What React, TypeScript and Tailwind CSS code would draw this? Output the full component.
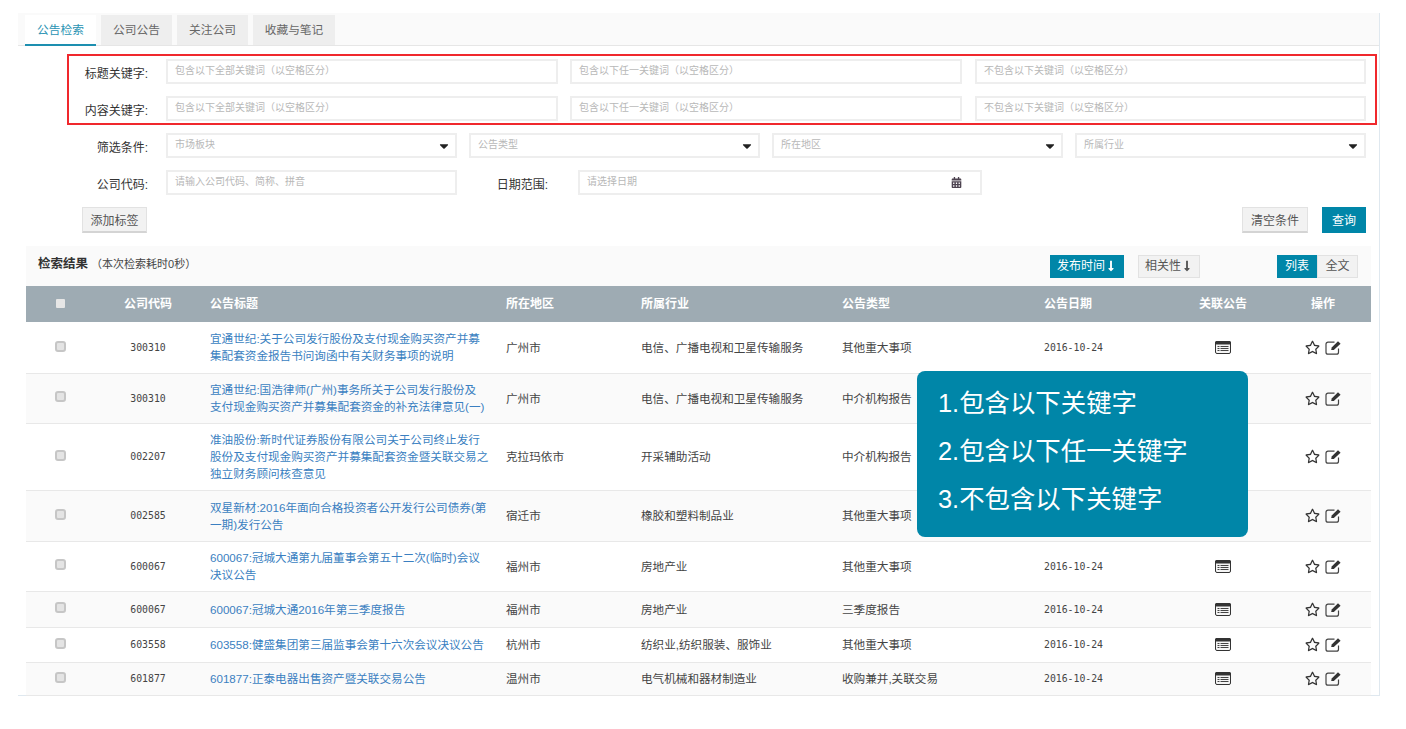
import { FaCaretDown, FaCalendarAlt, FaRegStar, FaLongArrowAltDown } from 'react-icons/fa';

const FONT = '"Liberation Sans", "Noto Sans CJK SC", sans-serif';

// covered: the callout sits over this row's date and related-notice cells
const ROWS = [
  { code: '300310', title: '宜通世纪:关于公司发行股份及支付现金购买资产并募\n集配套资金报告书问询函中有关财务事项的说明', area: '广州市', industry: '电信、广播电视和卫星传输服务', type: '其他重大事项', h: 'h-[51px]' },
  { code: '300310', title: '宜通世纪:国浩律师(广州)事务所关于公司发行股份及\n支付现金购买资产并募集配套资金的补充法律意见(一)', area: '广州市', industry: '电信、广播电视和卫星传输服务', type: '中介机构报告', h: 'h-[50px]', covered: true },
  { code: '002207', title: '准油股份:新时代证券股份有限公司关于公司终止发行\n股份及支付现金购买资产并募集配套资金暨关联交易之\n独立财务顾问核查意见', area: '克拉玛依市', industry: '开采辅助活动', type: '中介机构报告', h: 'h-[67px]', covered: true },
  { code: '002585', title: '双星新材:2016年面向合格投资者公开发行公司债券(第\n一期)发行公告', area: '宿迁市', industry: '橡胶和塑料制品业', type: '其他重大事项', h: 'h-[51px]', covered: true },
  { code: '600067', title: '600067:冠城大通第九届董事会第五十二次(临时)会议\n决议公告', area: '福州市', industry: '房地产业', type: '其他重大事项', h: 'h-[50px]' },
  { code: '600067', title: '600067:冠城大通2016年第三季度报告', area: '福州市', industry: '房地产业', type: '三季度报告', h: 'h-[36px]' },
  { code: '603558', title: '603558:健盛集团第三届监事会第十六次会议决议公告', area: '杭州市', industry: '纺织业,纺织服装、服饰业', type: '其他重大事项', h: 'h-[35px]' },
  { code: '601877', title: '601877:正泰电器出售资产暨关联交易公告', area: '温州市', industry: '电气机械和器材制造业', type: '收购兼并,关联交易', h: 'h-[33px]' },
];

function TextBox({ text, className }: { text: string; className: string }) {
  return (
    <div className={`flex h-[25px] items-center border-2 border-[#eeeeee] bg-white pb-[3px] pl-[7px] text-[10px] text-[#b8b8b8] ${className}`}>
      {text}
    </div>
  );
}

function SelectBox({ text }: { text: string }) {
  return (
    <div className="flex h-[25px] flex-1 items-center justify-between border-2 border-[#eeeeee] bg-white pl-[7px] pr-[4px] text-[10px] text-[#b8b8b8]">
      <span className="pb-[3px]">{text}</span>
      <FaCaretDown className="text-[14px] text-[#222222]" />
    </div>
  );
}

function Label({ text, className = 'w-[148px] pr-[18px] pt-[5px]' }: { text: string; className?: string }) {
  return <div className={`shrink-0 text-right text-[12px] text-[#333333] ${className}`}>{text}:</div>;
}

function ListIcon() {
  return (
    <svg width="16" height="13" viewBox="0 0 16 13">
      <rect x="0.5" y="0.5" width="15" height="12" rx="1.5" fill="#f4f4f4" stroke="#333333" />
      <rect x="0" y="0" width="16" height="3.5" rx="1.5" fill="#333333" />
      <path d="M2.5 5.5h2M2.5 7.5h2M2.5 9.5h2M5.5 5.5h8M5.5 7.5h8M5.5 9.5h8" stroke="#444444" strokeWidth="1" />
    </svg>
  );
}

function EditIcon() {
  return (
    <svg width="17" height="15" viewBox="0 0 17 15">
      <path d="M9.5 2.2H3a2 2 0 0 0-2 2v8a2 2 0 0 0 2 2h8.5a2 2 0 0 0 2-2V8.5" fill="none" stroke="#444444" strokeWidth="1.2" />
      <path d="M6.2 10 6.7 7.6 13 1.2 15.6 3.8 8.8 10Z" fill="#333333" />
    </svg>
  );
}

function GrayBtn({ text, className = '' }: { text: string; className?: string }) {
  return (
    <button className={`h-[26px] border border-[#e2e2e2] border-b-2 border-b-[#d4d4d4] bg-[#f2f2f2] pt-[2px] text-[12px] text-[#555555] ${className}`}>
      {text}
    </button>
  );
}

export default function App() {
  return (
    <div className="h-[729px] w-[1406px] overflow-hidden bg-white pt-[13px]" style={{ fontFamily: FONT }}>
      <div className="ml-[18px] h-[683px] w-[1362px] border-b border-r border-[#dfe8ef]">
        <div className="flex h-[33px] gap-[5px] border-b border-[#e6e6e6] bg-[#fafafa] pl-[7px] pt-[2px] text-[11.7px]">
          <div className="flex h-[31px] w-[71px] items-center justify-center border-b-2 border-[#1d8fb0] bg-white text-[#2a93b3]">公告检索</div>
          <div className="flex h-[30px] w-[71px] items-center justify-center bg-[#eeeeee] text-[#666666]">公司公告</div>
          <div className="flex h-[30px] w-[71px] items-center justify-center bg-[#eeeeee] text-[#666666]">关注公司</div>
          <div className="flex h-[30px] w-[82px] items-center justify-center bg-[#eeeeee] text-[#666666]">收藏与笔记</div>
        </div>

        <div className="ml-[49px] mt-[8px] flex h-[71px] w-[1310px] flex-col gap-[12px] border-2 border-[#f0282d] pl-[2px] pt-[3px]">
          <div className="flex items-center">
            <Label text="标题关键字" className="w-[95px] pr-[18px] pt-[4px]" />
            <TextBox text="包含以下全部关键词（以空格区分）" className="w-[392px]" />
            <TextBox text="包含以下任一关键词（以空格区分）" className="ml-[12px] w-[392px]" />
            <TextBox text="不包含以下关键词（以空格区分）" className="ml-[13px] w-[391px]" />
          </div>
          <div className="flex items-center">
            <Label text="内容关键字" className="w-[95px] pr-[18px] pt-[4px]" />
            <TextBox text="包含以下全部关键词（以空格区分）" className="w-[392px]" />
            <TextBox text="包含以下任一关键词（以空格区分）" className="ml-[12px] w-[392px]" />
            <TextBox text="不包含以下关键词（以空格区分）" className="ml-[13px] w-[391px]" />
          </div>
        </div>

        <div className="mt-[8px] flex w-[1348px] items-center">
          <Label text="筛选条件" />
          <div className="flex flex-1 gap-[12px]">
            <SelectBox text="市场板块" />
            <SelectBox text="公告类型" />
            <SelectBox text="所在地区" />
            <SelectBox text="所属行业" />
          </div>
        </div>

        <div className="mt-[12px] flex items-center">
          <Label text="公司代码" />
          <TextBox text="请输入公司代码、简称、拼音" className="w-[291px]" />
          <Label text="日期范围" className="w-[92px] pr-[1px] pt-[5px]" />
          <div className="ml-[29px] flex h-[25px] w-[404px] items-center justify-between border-2 border-[#eeeeee] bg-white pl-[7px] pr-[18px] text-[10px] text-[#b8b8b8]">
            <span className="pb-[3px]">请选择日期</span>
            <FaCalendarAlt className="text-[11px] text-[#4d4350]" />
          </div>
        </div>

        <div className="mt-[12px] flex w-[1348px] items-center justify-between pl-[64px]">
          <GrayBtn text="添加标签" className="w-[65px]" />
          <div className="flex gap-[14px]">
            <GrayBtn text="清空条件" className="w-[66px]" />
            <button className="h-[26px] w-[44px] bg-[#0086a8] pt-[2px] text-[12px] text-white">查询</button>
          </div>
        </div>

        <div className="ml-[8px] mt-[13px] flex h-[40px] w-[1345px] items-center justify-between bg-[#fafafa] pl-[12px] pr-[13px]">
          <div className="pb-[4px] text-[11px] text-[#444444]">
            <span className="text-[12.5px] font-bold text-[#333333]">检索结果</span> （本次检索耗时0秒）
          </div>
          <div className="flex items-center">
            <button className="flex h-[23px] w-[74px] items-center justify-center bg-[#0086a8] text-[12px] text-white">
              发布时间<FaLongArrowAltDown className="text-[12px]" />
            </button>
            <button className="ml-[14px] flex h-[23px] w-[62px] items-center justify-center border border-[#e2e2e2] bg-[#f2f2f2] text-[12px] text-[#555555]">
              相关性<FaLongArrowAltDown className="text-[12px]" />
            </button>
            <button className="ml-[77px] h-[23px] w-[40px] bg-[#0086a8] text-[12px] text-white">列表</button>
            <button className="h-[23px] w-[41px] border border-[#e2e2e2] bg-[#f2f2f2] text-[12px] text-[#555555]">全文</button>
          </div>
        </div>

        <div className="relative ml-[8px] w-[1345px]">
          <table className="w-full table-fixed border-collapse text-[11.6px] text-[#444444]">
            <colgroup>
              <col className="w-[68px]" />
              <col className="w-[116px]" />
              <col className="w-[296px]" />
              <col className="w-[135px]" />
              <col className="w-[201px]" />
              <col className="w-[202px]" />
              <col className="w-[129px]" />
              <col className="w-[100px]" />
              <col className="w-[98px]" />
            </colgroup>
            <thead>
              <tr className="h-[36px] bg-[#9eabb3] text-left text-[12px] text-white">
                <th className="text-center font-bold">
                  <span className="inline-block h-[9px] w-[9px] rounded-[1px] bg-[#e6e6e6]" />
                </th>
                <th className="pr-[8px] text-center font-bold">公司代码</th>
                <th className="font-bold">公告标题</th>
                <th className="font-bold">所在地区</th>
                <th className="font-bold">所属行业</th>
                <th className="font-bold">公告类型</th>
                <th className="font-bold">公告日期</th>
                <th className="text-center font-bold">关联公告</th>
                <th className="pl-[2px] text-center font-bold">操作</th>
              </tr>
            </thead>
            <tbody>
              {ROWS.map((row, i) => (
                <tr key={i} className={`${row.h} border-b border-[#e8e8e8] ${i % 2 === 1 ? 'bg-[#fafafa]' : 'bg-white'}`}>
                  <td className="text-center">
                    <span className="inline-block h-[11px] w-[11px] rounded-[3px] border-2 border-[#c6c6c6] bg-[#e4e4e4]" />
                  </td>
                  <td className="pr-[8px] pt-[2px] text-center font-['DejaVu_Sans_Mono'] text-[9.8px]">{row.code}</td>
                  <td className="whitespace-pre-line leading-[17px] text-[#3a7fc1]">{row.title}</td>
                  <td className="pt-[1px]">{row.area}</td>
                  <td className="pt-[1px]">{row.industry}</td>
                  <td className="pt-[1px]">{row.type}</td>
                  <td className="pt-[2px] font-['DejaVu_Sans_Mono'] text-[9.8px]">{row.covered ? '' : '2016-10-24'}</td>
                  <td>
                    {!row.covered && <div className="flex justify-center"><ListIcon /></div>}
                  </td>
                  <td>
                    <div className="flex items-center justify-center gap-[5px] pl-[3px] text-[#333333]">
                      <FaRegStar className="text-[15px]" />
                      <EditIcon />
                    </div>
                  </td>
                </tr>
              ))}
            </tbody>
          </table>

          <div className="absolute left-[891px] top-[85px] flex h-[166px] w-[331px] flex-col gap-[11px] rounded-[8px] bg-[#0086a8] pl-[21px] pt-[14px] text-[25.4px] leading-[37px] text-white">
            <div>1.包含以下关键字</div>
            <div>2.包含以下任一关键字</div>
            <div>3.不包含以下关键字</div>
          </div>
        </div>
      </div>
    </div>
  );
}
